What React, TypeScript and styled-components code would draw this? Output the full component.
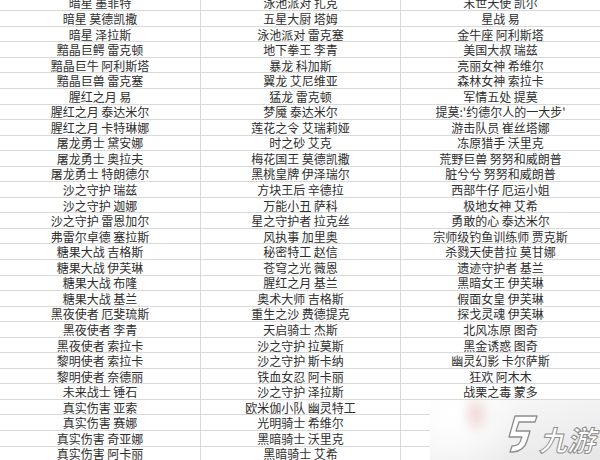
import React from "react";
import styled, { createGlobalStyle } from "styled-components";

const col1 = [
  "暗星 墨菲特",
  "暗星 莫德凯撒",
  "暗星 泽拉斯",
  "黯晶巨鳄 雷克顿",
  "黯晶巨牛 阿利斯塔",
  "黯晶巨兽 雷克塞",
  "腥红之月 易",
  "腥红之月 泰达米尔",
  "腥红之月 卡特琳娜",
  "屠龙勇士 黛安娜",
  "屠龙勇士 奥拉夫",
  "屠龙勇士 特朗德尔",
  "沙之守护 瑞兹",
  "沙之守护 迦娜",
  "沙之守护 雷恩加尔",
  "弗雷尔卓德 塞拉斯",
  "糖果大战 吉格斯",
  "糖果大战 伊芙琳",
  "糖果大战 布隆",
  "糖果大战 基兰",
  "黑夜使者 厄斐琉斯",
  "黑夜使者 李青",
  "黑夜使者 索拉卡",
  "黎明使者 索拉卡",
  "黎明使者 奈德丽",
  "未来战士 锤石",
  "真实伤害 亚索",
  "真实伤害 赛娜",
  "真实伤害 奇亚娜",
  "真实伤害 阿卡丽",
];

const col2 = [
  "泳池派对 扎克",
  "五星大厨 塔姆",
  "泳池派对 雷克塞",
  "地下拳王 李青",
  "暴龙 科加斯",
  "翼龙 艾尼维亚",
  "猛龙 雷克顿",
  "梦魇 泰达米尔",
  "莲花之令 艾瑞莉娅",
  "时之砂 艾克",
  "梅花国王 莫德凯撒",
  "黑桃皇牌 伊泽瑞尔",
  "方块王后 辛德拉",
  "万能小丑 萨科",
  "星之守护者 拉克丝",
  "风执事 加里奥",
  "秘密特工 赵信",
  "苍穹之光 薇恩",
  "腥红之月 基兰",
  "奥术大师 吉格斯",
  "重生之沙 费德提克",
  "天启骑士 杰斯",
  "沙之守护 拉莫斯",
  "沙之守护 斯卡纳",
  "铁血女忍 阿卡丽",
  "沙之守护 泽拉斯",
  "欧米伽小队 幽灵特工",
  "光明骑士 希维尔",
  "黑暗骑士 沃里克",
  "黑暗骑士 艾希",
];

const col3 = [
  "末世天使 凯尔",
  "星战 易",
  "金牛座 阿利斯塔",
  "美国大叔 瑞兹",
  "亮丽女神 希维尔",
  "森林女神 索拉卡",
  "军情五处 提莫",
  "提莫:'约德尔人的一大步'",
  "游击队员 崔丝塔娜",
  "冻原猎手 沃里克",
  "荒野巨兽 努努和威朗普",
  "脏兮兮 努努和威朗普",
  "西部牛仔 厄运小姐",
  "极地女神 艾希",
  "勇敢的心 泰达米尔",
  "宗师级钓鱼训练师 贾克斯",
  "杀戮天使昔拉 莫甘娜",
  "遗迹守护者 基兰",
  "黑暗女王 伊芙琳",
  "假面女皇 伊芙琳",
  "探戈灵魂 伊芙琳",
  "北风冻原 图奇",
  "黑金诱惑 图奇",
  "幽灵幻影 卡尔萨斯",
  "狂欢 阿木木",
  "战栗之毒 蒙多",
  "",
  "",
  "",
  "",
];

const GlobalStyle = createGlobalStyle`
  html, body {
    margin: 0;
    padding: 0;
    background: #ffffff;
    overflow: hidden;
  }
  body {
    font-family: "Noto Sans CJK SC", "Noto Sans", sans-serif;
  }
`;

const Page = styled.div`
  position: relative;
  width: 600px;
  height: 460px;
  overflow: hidden;
  background: #ffffff;
`;

const Sheet = styled.div`
  display: grid;
  grid-template-columns: 200px 200px 200px;
  grid-auto-rows: 15.55px;
  margin-top: -4.3px;
`;

const Cell = styled.div<{ $first?: boolean }>`
  display: flex;
  align-items: center;
  justify-content: center;
  box-sizing: border-box;
  border-bottom: 1px solid #d9d9d9;
  border-left: ${(p) => (p.$first ? "none" : "1px solid #d9d9d9")};
  font-size: 12px;
  line-height: 1;
  color: #2e2e2e;
  white-space: nowrap;
  padding-top: 1px;
`;

const Watermark = styled.div`
  position: absolute;
  left: 430px;
  top: 400px;
  width: 170px;
  height: 60px;
  background: linear-gradient(165deg, #fbfbfb 0%, #f1f1f1 50%, #e6e6e6 100%);
  display: flex;
  align-items: flex-end;
  justify-content: flex-end;
  gap: 3px;
  padding: 0 2px 7px 0;
  box-sizing: border-box;
  overflow: hidden;
`;

const Smudge = styled.div`
  position: absolute;
  left: 38px;
  top: 0;
  width: 16px;
  height: 28px;
  border-radius: 50%;
  background: rgba(225, 160, 160, 0.4);
  filter: blur(6px);
`;

const Haze = styled.div`
  position: absolute;
  left: 0;
  top: 0;
  width: 90px;
  height: 60px;
  background: radial-gradient(circle at 25% 25%, #ffffff 0%, rgba(255, 255, 255, 0) 85%);
`;

const LogoText = styled.span`
  position: relative;
  font-family: "Noto Sans CJK SC", sans-serif;
  font-size: 28px;
  line-height: 28px;
  font-weight: 700;
  color: #ffffff;
  -webkit-text-stroke: 1px #8c8c8c;
  letter-spacing: 0;
  transform: skewX(-14deg);
`;

const LogoMark = () => (
  <svg width="36" height="40" viewBox="0 0 36 40" style={{ position: "relative", marginBottom: -1 }}>
    <path
      d="M12 2 L34 2 L32 8 L16 8 L13 17 L27 17 L24 27 Q21 37 10 38 L7 38 L9 32 Q17 32 18 25 L19 23 L6 23 Z"
      fill="#ffffff"
      stroke="#8c8c8c"
      strokeWidth="1.3"
      strokeLinejoin="round"
    />
  </svg>
);

export default function App() {
  const rows = col1.map((_, i) => [col1[i], col2[i], col3[i]]);
  return (
    <Page>
      <GlobalStyle />
      <Sheet>
        {rows.map((r, i) =>
          r.map((t, j) => (
            <Cell key={`${i}-${j}`} $first={j === 0}>
              {t}
            </Cell>
          ))
        )}
      </Sheet>
      <Watermark>
        <Haze />
        <Smudge />
        <LogoMark />
        <LogoText>九游</LogoText>
      </Watermark>
    </Page>
  );
}
